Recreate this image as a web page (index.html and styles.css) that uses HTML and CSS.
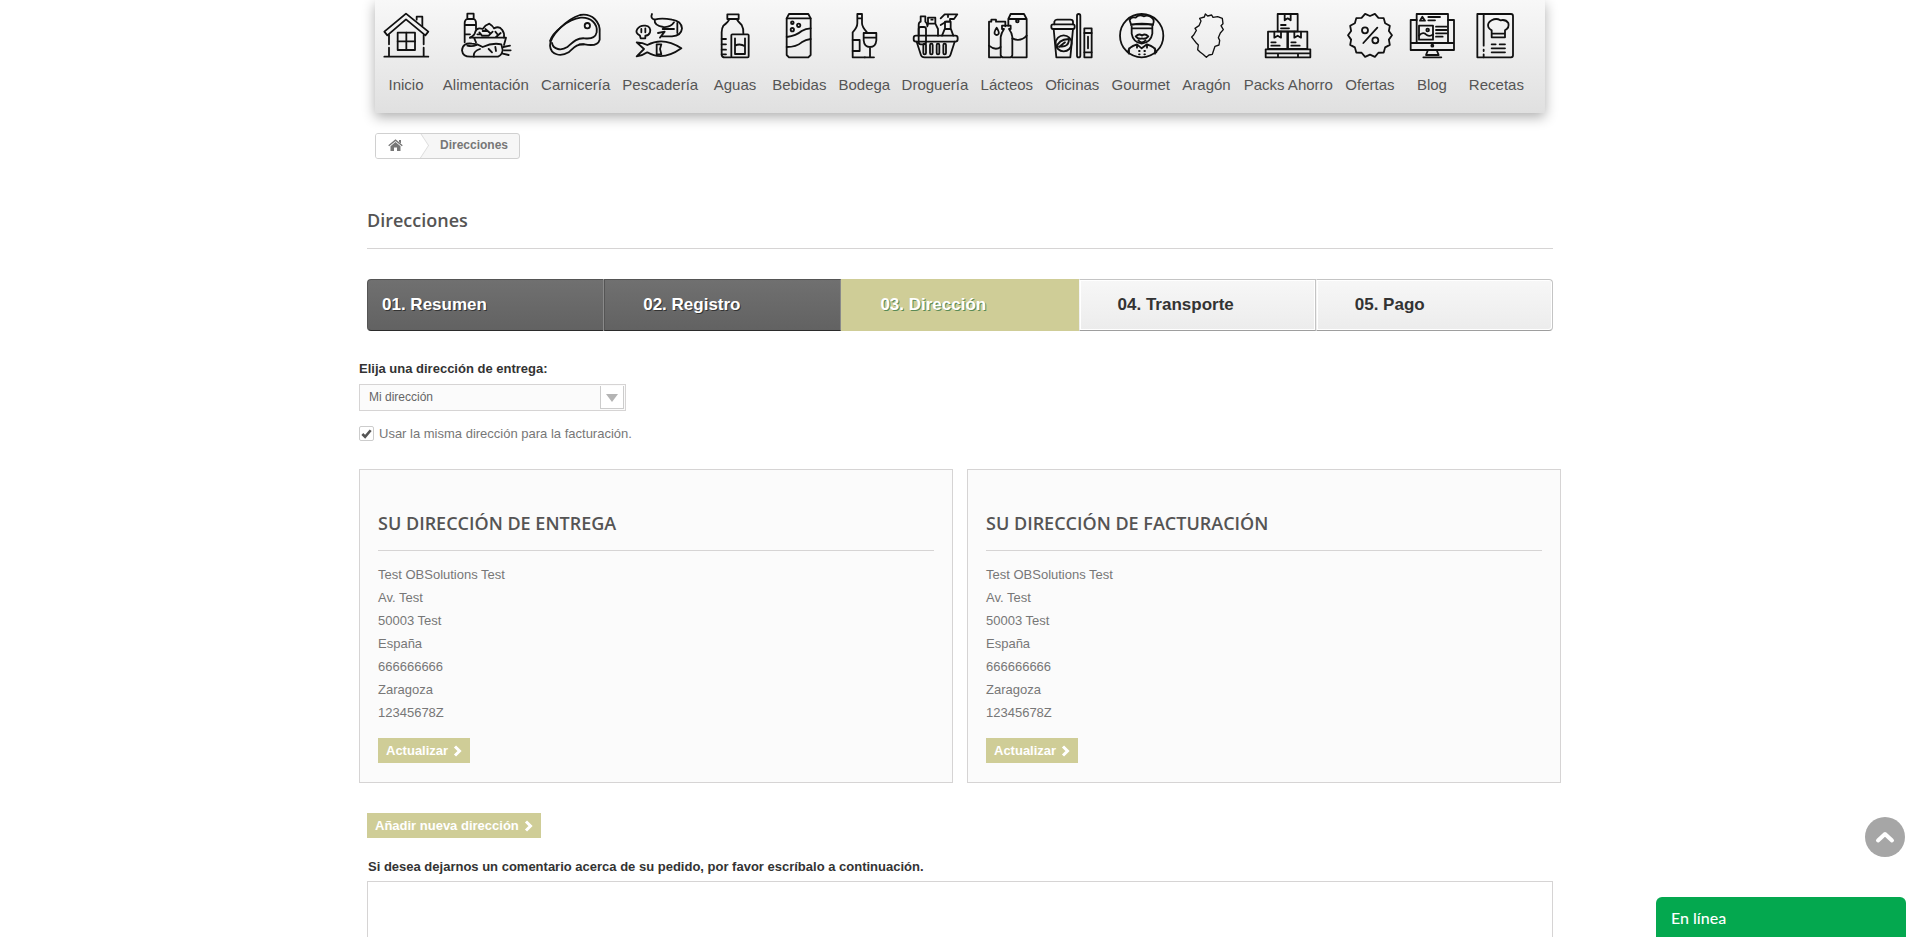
FILE: index.html
```html
<!DOCTYPE html>
<html lang="es">
<head>
<meta charset="utf-8">
<title>Direcciones</title>
<link rel="stylesheet" href="styles.css">
</head>
<body>
<div class="wrap">
  <div class="inner">
    <nav class="menu">
      <a class="mi"><svg class="ic" viewBox="9 21 168 144"><path d="M28 155H160M42 90V118M42 128V155M146 90V118M146 128V155"/><path d="M28 80L93 26L160 80L151 91L93 43L37 91Z"/><path d="M125 44V35H142V64"/><rect x="68" y="83" width="52" height="52"/><path d="M94 83V135M68 109H120"/></svg><span>Inicio</span></a>
      <a class="mi"><svg class="ic" viewBox="248 21 168 144"><path d="M276 40V26H295V40M268 112V54Q268 44 276 42H295Q302 44 302 54V72M268 60H302M268 88H284"/><path d="M284 98Q298 92 300 80Q305 66 322 72Q330 60 342 56Q352 62 356 70Q372 62 380 74Q388 84 386 98"/><path d="M284 98H392L386 120M296 98L302 112M312 82L320 92H340L352 80M322 78H334M360 80L368 90M330 72L344 84M306 88H316M362 96L376 84"/><path d="M290 116Q262 112 260 136Q262 155 285 155H368Q380 150 382 135L378 118Q352 112 322 126Q306 116 290 116Z"/><path d="M276 122Q290 126 304 120M296 155Q292 140 314 132M340 132L350 142M360 126L362 138M384 126L404 122M386 136L406 136M382 146L400 150"/></svg><span>Alimentación</span></a>
      <a class="mi"><svg class="ic" viewBox="518 21 168 144"><path d="M524 122C524 92 574 42 614 30C650 24 676 50 673 84V104C668 122 648 122 628 118C604 116 596 128 580 142C556 156 526 150 524 122Z"/><path d="M524 108C530 84 578 42 616 38C646 36 668 56 664 82C660 100 646 102 628 100C604 98 592 112 576 126C558 138 534 134 530 114"/><circle cx="636" cy="62" r="8"/><path d="M612 118H626"/></svg><span>Carnicería</span></a>
      <a class="mi"><svg class="ic" viewBox="772 21 168 144"><path d="M832 27Q826 40 840 44Q860 38 892 44Q920 48 922 70Q920 92 892 94H862"/><path d="M840 44Q838 62 866 66Q888 68 898 52M898 72H864M908 54V84M850 84L870 80L856 98"/><path d="M796 92Q780 84 788 72Q796 60 812 62Q830 64 826 82Q822 92 812 92V100H798Z"/><path d="M800 72V82M812 70V82"/><path d="M786 112L808 132L786 154Q804 152 818 142Q864 170 920 130Q866 94 818 120Q804 112 786 112Z"/><path d="M846 118H860L856 132L860 148H846Z"/></svg><span>Pescadería</span></a>
      <a class="mi"><svg class="ic" viewBox="51 21 168 144"><path d="M112 42V28H146V42ZM118 42Q116 50 100 62Q95 70 95 82V150Q96 157 104 157H124M140 42Q144 50 155 60Q161 70 160 86"/><path d="M95 102H108M95 118H108M95 134H108M95 148H108"/><rect x="124" y="88" width="52" height="69" rx="3"/><path d="M135 100V147H165V100M135 122Q150 114 165 124"/></svg><span>Aguas</span></a>
      <a class="mi"><svg class="ic" viewBox="244 21 168 144"><path d="M291 40L298 27H356L363 40V150L356 157H298L291 150Z"/><path d="M291 40H363"/><circle cx="308" cy="53" r="4"/><circle cx="327" cy="61" r="5"/><circle cx="308" cy="74" r="5"/><path d="M291 96Q320 92 336 78Q348 70 363 70M291 126Q320 126 336 112Q348 104 363 102"/></svg><span>Bebidas</span></a>
      <a class="mi"><svg class="ic" viewBox="439 21 168 144"><path d="M503 55V27H517V55Q517 66 532 82M503 55Q503 68 489 82V157H526M503 40H517"/><path d="M489 105H510V138H489"/><path d="M522 84H560V106Q558 126 541 126Q524 126 522 106ZM522 98H560M541 126V156M525 157H553"/></svg><span>Bodega</span></a>
      <a class="mi"><svg class="ic" viewBox="651 21 168 144"><rect x="671" y="92" width="132" height="18" rx="7"/><path d="M680 110L692 148Q694 157 704 157H770Q780 157 782 148L794 110"/><rect x="700" y="116" width="8" height="32" rx="4"/><rect x="720" y="116" width="8" height="32" rx="4"/><rect x="740" y="116" width="8" height="32" rx="4"/><rect x="760" y="116" width="8" height="32" rx="4"/><path d="M686 92V60Q686 52 692 50V34H706V50Q710 54 712 60"/><rect x="686" y="66" width="22" height="52" rx="6"/><path d="M714 56V38H736V56ZM712 64L714 56H736L744 72V92"/><path d="M724 44H728"/><path d="M756 92L765 70V50H782V70L790 92M766 72H782"/><path d="M752 40L764 28H802L792 42H780V50H768L752 60M774 28V36"/></svg><span>Droguería</span></a>
      <a class="mi"><svg class="ic" viewBox="-3 21 168 144"><path d="M85 42L92 27H132L140 42V157H97M85 42H140M85 42V62"/><circle cx="112" cy="48" r="4"/><path d="M27 157V50H34V44H48V50H76V64M27 157H62"/><path d="M66 62H92V72H87Q96 84 97 96V150Q96 157 90 157H70Q63 157 62 150V96Q64 84 72 72H66Z"/><path d="M50 68Q42 80 44 86Q50 94 56 86Q58 80 50 68Z"/><path d="M27 122Q46 138 62 126M97 100Q122 112 140 92"/></svg><span>Lácteos</span></a>
      <a class="mi"><svg class="ic" viewBox="193 21 168 144"><path d="M224 58V50Q226 44 232 44H272Q280 44 280 50V58"/><rect x="215" y="58" width="70" height="14" rx="5"/><path d="M222 72L230 157H272L280 72"/><circle cx="252" cy="115" r="24"/><path d="M232 128Q234 104 268 102Q268 128 240 124M238 126L256 112"/><rect x="292" y="27" width="10" height="130" rx="5"/><rect x="314" y="70" width="22" height="87"/><path d="M314 84H336M314 142H336M325 95V130"/></svg><span>Oficinas</span></a>
      <a class="mi"><svg class="ic" viewBox="398 21 168 144"><circle cx="484" cy="92" r="65"/><path d="M452 58L448 46Q452 34 466 38Q476 26 490 34Q504 28 514 38Q524 44 518 58Z"/><path d="M452 60Q484 52 518 60"/><path d="M454 64V86Q458 112 484 116Q512 112 516 86V64M458 70H512"/><path d="M466 94Q476 84 485 92Q494 84 504 94Q496 104 485 100Q474 104 466 94ZM474 106Q484 118 496 106"/><path d="M442 142Q444 126 470 118L484 130L500 118Q526 126 528 142M470 118L470 128M500 118V128M446 130V146M524 130V146"/><path d="M476 138H478M492 138H494M476 148H478M492 148H494"/></svg><span>Gourmet</span></a>
      <a class="mi"><svg class="ic aragon" viewBox="596 21 168 144"><path d="M675 27L682 33L694 30L698 37L712 35L726 40L728 56L722 62L729 74L720 84L714 98L718 106L716 120L704 124L700 136L696 148L686 150L678 157L668 148L660 142L652 134L654 120L648 114L640 104L634 96L640 90L648 76L644 70L656 62L662 48L658 40L672 36Z"/></svg><span>Aragón</span></a>
      <a class="mi"><svg class="ic" viewBox="31 21 168 144"><rect x="84" y="27" width="60" height="52"/><path d="M105 27V46L114 40L123 46V27M94 60H108M94 70H118"/><rect x="55" y="80" width="58" height="52"/><path d="M74 80V98L84 92L94 98V80M65 112H78M65 122H90"/><rect x="115" y="80" width="58" height="52"/><path d="M134 80V98L144 92L154 98V80M125 112H138M125 122H150"/><path d="M48 133H182V157H48ZM48 145H182M85 145V157M145 145V157"/></svg><span>Packs Ahorro</span></a>
      <a class="mi"><svg class="ic" viewBox="276 21 168 144"><path d="M426 91L416.600 103.900L419.500 119.600L405.400 127.100L401.100 142.600L385.200 143.300L374.700 155.400L360 149L345.300 155.400L334.800 143.300L318.900 142.600L314.600 127.100L300.500 119.600L303.400 103.900L294 91L303.400 78.100L300.500 62.400L314.600 54.900L318.900 39.400L334.800 38.700L345.300 26.600L360 33L374.700 26.600L385.200 38.700L401.100 39.400L405.400 54.900L419.500 62.400L416.600 78.100Z"/><path d="M340 114L382 68"/><circle cx="345" cy="76" r="9"/><circle cx="376" cy="106" r="9"/></svg><span>Ofertas</span></a>
      <a class="mi"><svg class="ic" viewBox="462 21 168 144"><path d="M500 45H482V135H612V45H594M482 114H612"/><path d="M500 114V27H594V114"/><circle cx="547" cy="122" r="3"/><path d="M534 135L528 150H566L560 135M520 157H574Z"/><path d="M510 47L517 35L525 47ZM535 36H570M535 46H555"/><rect x="507" y="62" width="42" height="42"/><path d="M507 92Q520 78 530 90Q540 96 549 88"/><circle cx="533" cy="75" r="4"/><path d="M558 65H590M558 75H590M558 85H590M558 95H578"/></svg><span>Blog</span></a>
      <a class="mi"><svg class="ic" viewBox="655 21 168 144"><path d="M683 27H784Q790 27 790 33V151Q790 157 784 157H683Z"/><path d="M702 27V122M702 134V138M702 148V157"/><path d="M726 97H766V76Q780 68 776 54Q768 42 752 46Q740 38 726 46Q712 54 716 66Q718 72 726 76ZM726 86H766"/><path d="M726 118H738M750 118H766M726 130H766M726 142H766"/></svg><span>Recetas</span></a>
    </nav>
  </div>
  <div class="inner">
    <div class="crumb">
      <span class="crumb-home"><svg class="home" viewBox="0 0 15 12"><path d="M2.500 7.200L7.500 3L12.500 7.200V12H9V8.500H6V12H2.500Z"/><path class="roof" d="M0.700 6.700L7.500 1.200L14.300 6.700"/><path d="M11 1H13V4.500L11 3Z"/></svg></span>
      <span class="crumb-now">Direcciones</span>
    </div>
    <h1 class="page-title">Direcciones</h1>
    <ul class="steps">
      <li class="step done first"><span>01. Resumen</span></li>
      <li class="step done"><span>02. Registro</span></li>
      <li class="step now"><span>03. Dirección</span></li>
      <li class="step todo"><span>04. Transporte</span></li>
      <li class="step todo last"><span>05. Pago</span></li>
    </ul>
  </div>
  <label class="field-label">Elija una dirección de entrega:</label>
  <div class="select">
    <span>Mi dirección</span>
    <span class="select-arrow"></span>
  </div>
  <div class="same">
    <span class="check"><svg class="tick" viewBox="0 0 14 14"><path d="M2.500 7.500L5.500 10.500L11.500 3.500"/></svg></span>
    <span>Usar la misma dirección para la facturación.</span>
  </div>
  <div class="cards">
    <section class="card">
      <h3 class="card-title">SU DIRECCIÓN DE ENTREGA</h3>
      <ul class="lines">
        <li>Test OBSolutions Test</li>
        <li>Av. Test</li>
        <li>50003 Test</li>
        <li>España</li>
        <li>666666666</li>
        <li>Zaragoza</li>
        <li>12345678Z</li>
      </ul>
      <a class="btn">Actualizar<svg class="chev" viewBox="0 0 9 12"><path d="M2 1.500L6.500 6L2 10.500"/></svg></a>
    </section>
    <section class="card">
      <h3 class="card-title">SU DIRECCIÓN DE FACTURACIÓN</h3>
      <ul class="lines">
        <li>Test OBSolutions Test</li>
        <li>Av. Test</li>
        <li>50003 Test</li>
        <li>España</li>
        <li>666666666</li>
        <li>Zaragoza</li>
        <li>12345678Z</li>
      </ul>
      <a class="btn">Actualizar<svg class="chev" viewBox="0 0 9 12"><path d="M2 1.500L6.500 6L2 10.500"/></svg></a>
    </section>
  </div>
  <div class="inner">
    <a class="btn add">Añadir nueva dirección<svg class="chev" viewBox="0 0 9 12"><path d="M2 1.500L6.500 6L2 10.500"/></svg></a>
    <p class="note">Si desea dejarnos un comentario acerca de su pedido, por favor escríbalo a continuación.</p>
    <div class="textarea"></div>
  </div>
</div>
<a class="totop"><svg class="up" viewBox="0 0 20 14"><path d="M3 10.500L10 4L17 10.500"/></svg></a>
<div class="chat">En línea</div>
</body>
</html>
```

FILE: styles.css
```css
* { box-sizing: border-box; }
html, body { margin: 0; padding: 0; height: 937px; overflow: hidden; background: #fff; }
body { font-family: "Liberation Sans", Arial, sans-serif; font-size: 13px; color: #777; position: relative; }
ul { list-style: none; margin: 0; padding: 0; }
.wrap { width: 1202px; margin: 0 auto; }
.inner { margin: 0 8px; }

.menu {
  margin: 0 8px;
  height: 113px;
  display: grid;
  grid-template-columns: 62px 97.6px 82.2px 87px 62.4px 66.4px 63.6px 77.6px 66.2px 64.6px 72.4px 59.2px 104.4px 58.8px 65.2px 63.8px;
  justify-content: start;
  background: linear-gradient(#f8f8f8, #e0e0e0);
  box-shadow: 0 4px 12px rgba(0,0,0,.32);
}
.mi { display: flex; flex-direction: column; align-items: center; padding-top: 12px; font-size: 15px; color: #555; white-space: nowrap; min-width: 0; }
.mi span { margin-top: 14px; line-height: 22px; }
.ic { width: 56px; height: 48px; flex: none; fill: none; stroke: #111; stroke-width: 5.4; stroke-linecap: round; stroke-linejoin: round; }
.aragon { stroke-width: 4; }

.crumb {
  margin: 20px 0 0 8px;
  width: 145px;
  height: 26px;
  display: flex;
  border: 1px solid #d0d0d0;
  border-radius: 3px;
  background: #f6f6f6;
  overflow: hidden;
}
.crumb-home {
  width: 43px;
  background: #fff;
  position: relative;
  padding: 5px 0 0 12px;
  flex: none;
}
.crumb-home::after {
  content: "";
  position: absolute;
  right: -9px;
  top: -1px;
  width: 18px;
  height: 18px;
  transform: translateY(3px) rotate(45deg) skew(12deg, 12deg);
  background: #fff;
  border-top: 1px solid #ddd;
  border-right: 1px solid #ddd;
}
.home { display: block; width: 15px; height: 12px; fill: #777; }
.home .roof { fill: none; stroke: #777; stroke-width: 1.400; }
.crumb-now { margin-left: 21px; position: relative; font-size: 12px; font-weight: 700; line-height: 23px; color: #777; }

.page-title {
  margin: 49px 0 30px;
  padding-bottom: 16px;
  border-bottom: 1px solid #d6d4d4;
  font: 600 18px/24px "Open Sans", sans-serif;
  color: #555454;
}

.steps { display: flex; height: 52px; }
.step {
  flex: none;
  width: 20%;
  padding-left: 38px;
  font-size: 17px;
  font-weight: 700;
  line-height: 50px;
  border: 1px solid;
}
.step.first { padding-left: 14px; border-radius: 4px 0 0 4px; }
.step.last { border-radius: 0 4px 4px 0; }
.done {
  background: linear-gradient(#707070, #626262);
  border-color: #555 #8a8a8a #2b2b2b #555;
  color: #fff;
  text-shadow: 1px 1px #333;
}
.now {
  background: #cfcd97;
  border-color: #cfcd97;
  color: #fff;
  text-shadow: 1px 1px #5a8a55;
}
.todo {
  background: linear-gradient(#f7f7f7, #ececec);
  border-color: #c4c4c4 #c4c4c4 #9e9e9e transparent;
  box-shadow: inset 1px 1px 0 #fff, inset -1px -1px 0 #fff;
  color: #333;
}

.field-label { display: block; margin-top: 29px; font-weight: 700; font-size: 13px; line-height: 18px; color: #333; }
.select {
  margin-top: 6px;
  width: 267px;
  height: 27px;
  position: relative;
  border: 1px solid #d6d4d4;
  background: #fbfbfb;
  padding-left: 9px;
  font-size: 12px;
  line-height: 25px;
  color: #666;
}
.select-arrow {
  position: absolute;
  right: 1px;
  top: 1px;
  width: 24px;
  height: 23px;
  background: #fff;
  border-left: 1px solid #ccc;
  border-bottom: 1px solid #ccc;
  border-right: 1px solid #ccc;
}
.select-arrow::after {
  content: "";
  position: absolute;
  left: 5px;
  top: 8px;
  border: 6px solid transparent;
  border-top: 8px solid #b4b4b4;
  border-bottom: 0;
}
.same { display: flex; align-items: center; gap: 5px; margin-top: 15px; height: 14px; font-size: 13px; color: #777; }
.check { width: 15px; height: 15px; border: 1px solid #ccc; border-radius: 2px; flex: none; background: #fff; }
.tick { display: block; width: 13px; height: 13px; fill: none; stroke: #555; stroke-width: 2.800; }

.cards { display: flex; justify-content: space-between; margin-top: 29px; }
.card {
  width: 594px;
  height: 314px;
  border: 1px solid #d6d4d4;
  background: #fbfbfb;
  padding: 40px 18px 0;
}
.card-title {
  margin: 0;
  padding-bottom: 13px;
  border-bottom: 1px solid #d6d4d4;
  font: 600 18px/27px "Open Sans", sans-serif;
  color: #555454;
}
.lines { margin-top: 12px; }
.lines li { line-height: 23px; height: 23px; }
.btn {
  display: flex;
  width: fit-content;
  align-items: center;
  gap: 5px;
  height: 25px;
  padding: 0 8px;
  margin-top: 14px;
  background: #cfcd97;
  color: #fff;
  font-weight: 700;
  font-size: 13px;
}
.chev { width: 9px; height: 12px; fill: none; stroke: #fff; stroke-width: 3; }
.add { margin-top: 30px; }
.note { margin: 20px 0 0 1px; font-weight: 700; font-size: 13px; line-height: 18px; color: #333; }
.textarea { margin-top: 5px; height: 120px; border: 1px solid #d6d4d4; background: #fff; }

.totop {
  position: absolute;
  left: 1865px;
  top: 817px;
  width: 40px;
  height: 40px;
  border-radius: 50%;
  background: #a6a6a6;
  display: flex;
  align-items: center;
  justify-content: center;
}
.up { width: 20px; height: 14px; fill: none; stroke: #fff; stroke-width: 4; stroke-linecap: round; stroke-linejoin: round; }
.chat {
  position: absolute;
  left: 1656px;
  top: 897px;
  width: 250px;
  height: 40px;
  padding-left: 15px;
  border-radius: 6px 6px 0 0;
  background: #04a84f;
  color: #fff;
  font: 500 16px/41px Lato, sans-serif;
}
```
